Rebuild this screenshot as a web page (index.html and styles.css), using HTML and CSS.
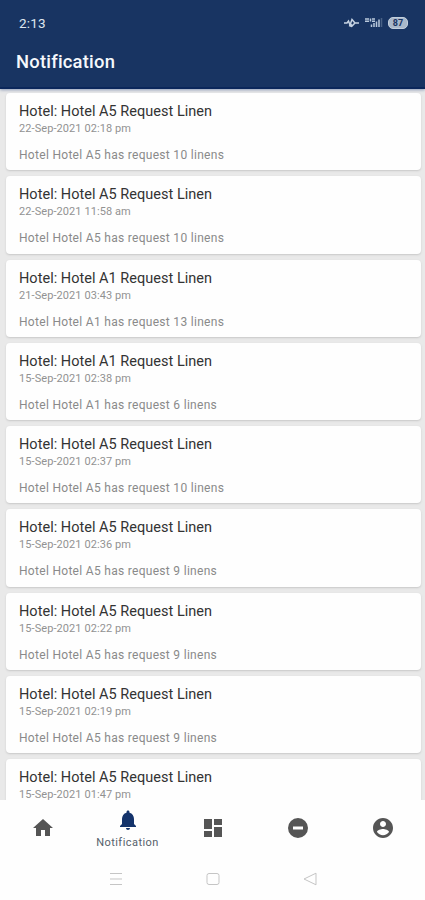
FILE: index.html
```html
<!DOCTYPE html>
<html lang="en">
<head>
<meta charset="utf-8">
<title>Notification</title>
<link rel="stylesheet" href="styles.css">
</head>
<body>
<header class="header">
  <div class="status">
    <span class="clock">2:13</span>
    <div class="indicators">
      <svg width="16" height="12" viewBox="0 0 16 12" fill="none" stroke="#c6d3e3" stroke-width="1.500"><path d="M0 6h3l1.500-2 1.500 4 2-5.500 3 3.500-3 3-2-3M5 8.500l3 1M11 6h4"/></svg>
      <svg width="18" height="12" viewBox="0 0 18 12" fill="none" stroke="#b9c9dc" stroke-width="1.500"><path d="M0 2h4M0 4.300h4M5.500 1.500v3M7 2h3M7 4.300h3M6.500 10V7.500M9 10V6M11.500 10V4.500M14 10V2.500"/><path d="M16.500 10V1" opacity=".3"/></svg>
      <span class="battery">87</span>
    </div>
  </div>
  <h1 class="heading">Notification</h1>
</header>
<main class="list">
  <article class="card"><h2>Hotel: Hotel A5 Request Linen</h2><time>22-Sep-2021 02:18 pm</time><p>Hotel Hotel A5 has request 10 linens</p></article>
  <article class="card"><h2>Hotel: Hotel A5 Request Linen</h2><time>22-Sep-2021 11:58 am</time><p>Hotel Hotel A5 has request 10 linens</p></article>
  <article class="card"><h2>Hotel: Hotel A1 Request Linen</h2><time>21-Sep-2021 03:43 pm</time><p>Hotel Hotel A1 has request 13 linens</p></article>
  <article class="card"><h2>Hotel: Hotel A1 Request Linen</h2><time>15-Sep-2021 02:38 pm</time><p>Hotel Hotel A1 has request 6 linens</p></article>
  <article class="card"><h2>Hotel: Hotel A5 Request Linen</h2><time>15-Sep-2021 02:37 pm</time><p>Hotel Hotel A5 has request 10 linens</p></article>
  <article class="card"><h2>Hotel: Hotel A5 Request Linen</h2><time>15-Sep-2021 02:36 pm</time><p>Hotel Hotel A5 has request 9 linens</p></article>
  <article class="card"><h2>Hotel: Hotel A5 Request Linen</h2><time>15-Sep-2021 02:22 pm</time><p>Hotel Hotel A5 has request 9 linens</p></article>
  <article class="card"><h2>Hotel: Hotel A5 Request Linen</h2><time>15-Sep-2021 02:19 pm</time><p>Hotel Hotel A5 has request 9 linens</p></article>
  <article class="card"><h2>Hotel: Hotel A5 Request Linen</h2><time>15-Sep-2021 01:47 pm</time></article>
</main>
<nav class="tabs">
  <a class="tab"><svg class="icon" viewBox="0 0 24 24"><path d="M10 20v-6h4v6h5v-8h3L12 3 2 12h3v8z"/></svg></a>
  <a class="tab active"><svg class="icon" viewBox="0 0 24 24"><path d="M12 22c1.100 0 2-.9 2-2h-4c0 1.100.9 2 2 2zm6-6v-5c0-3.070-1.640-5.640-4.500-6.320V4c0-.83-.67-1.500-1.500-1.500s-1.500.67-1.500 1.500v.68C7.630 5.360 6 7.920 6 11v5l-2 2v1h16v-1l-2-2z"/></svg><span>Notification</span></a>
  <a class="tab"><svg class="icon" viewBox="0 0 24 24"><path d="M3 13h8V3H3v10zm0 8h8v-6H3v6zm10 0h8V11h-8v10zm0-18v6h8V3h-8z"/></svg></a>
  <a class="tab"><svg class="icon" viewBox="0 0 24 24"><path d="M12 2a10 10 0 1 0 0 20 10 10 0 0 0 0-20zm5 11.500H7v-3h10v3z"/></svg></a>
  <a class="tab"><svg class="icon" viewBox="0 0 24 24"><path d="M12 2C6.480 2 2 6.480 2 12s4.480 10 10 10 10-4.480 10-10S17.520 2 12 2zm0 3c1.660 0 3 1.340 3 3s-1.340 3-3 3-3-1.340-3-3 1.340-3 3-3zm0 14.200c-2.500 0-4.710-1.280-6-3.220.03-1.990 4-3.080 6-3.080 1.990 0 5.970 1.090 6 3.080-1.290 1.940-3.500 3.220-6 3.220z"/></svg></a>
</nav>
<footer class="system">
  <svg width="14" height="14" viewBox="0 0 14 14"><path d="M1 1.500h12M1 7h12M1 12.500h12"/></svg>
  <svg width="14" height="14" viewBox="0 0 14 14"><rect x="1" y="1.500" width="12" height="11" rx="2"/></svg>
  <svg width="14" height="14" viewBox="0 0 14 14"><path d="M13 1.200v11.600L1 7z" stroke-linejoin="round"/></svg>
</footer>
</body>
</html>
```
FILE: styles.css
```css
* { box-sizing: border-box; }
body {
  margin: 0;
  width: 425px;
  height: 900px;
  display: flex;
  flex-direction: column;
  overflow: hidden;
  background: #fefefe;
  font-family: Roboto, sans-serif;
}
.header {
  height: 89px;
  flex: none;
  background: #183462;
  border-bottom: 2px solid #0b275b;
  box-shadow: 0 1px 3px #8e9cb8;
  color: #f5f8fc;
  z-index: 1;
}
.status {
  display: flex;
  justify-content: space-between;
  align-items: center;
  height: 46px;
  padding: 0 17px 0 19px;
}
.clock { font-size: 13.5px; letter-spacing: .2px; color: #dfe7f0; }
.indicators { display: flex; align-items: center; gap: 5px; }
.battery {
  width: 20px;
  height: 12px;
  border: 1.5px solid #c3cfdd;
  border-radius: 5px;
  background: #a9b8ca;
  color: #183462;
  font-size: 9px;
  font-weight: 700;
  line-height: 10px;
  text-align: center;
}
.heading { margin: 5px 0 0 16px; font-size: 18.4px; line-height: 22px; font-weight: 500; letter-spacing: .22px; }
.list {
  height: 711px;
  flex: none;
  overflow: hidden;
  background: #e9e9e9;
  padding: 4px 4px 0 6px;
  display: flex;
  flex-direction: column;
  gap: 6px;
}
.card {
  flex: none;
  height: 77.3px;
  padding: 10px 13px 0;
  border-radius: 4px;
  background: #fefefe;
  box-shadow: 0 1px 2px #c8c8c8;
}
.card h2 { margin: 0; font-size: 14.5px; line-height: 18px; font-weight: 400; letter-spacing: .02px; color: #333; }
.card time { display: block; font-size: 11px; line-height: 16px; letter-spacing: .08px; color: #929292; }
.card p { margin: 10px 0 0; font-size: 12px; line-height: 16px; letter-spacing: .3px; color: #8a8a8a; }
.tabs { height: 56px; flex: none; display: grid; grid-template-columns: repeat(5, 1fr); background: #fefefe; }
.tab { display: flex; flex-direction: column; align-items: center; padding-top: 16px; }
.icon { width: 24px; height: 24px; fill: #555; }
.tab.active { padding-top: 8px; }
.active .icon { fill: #14336b; }
.active span { font-size: 11px; line-height: 14px; margin-top: 4px; letter-spacing: .45px; color: #56616b; }
.system { display: flex; justify-content: center; gap: 83px; padding-top: 16px; }
.system svg { fill: none; stroke: #c5c5c5; stroke-width: 1; }
```
